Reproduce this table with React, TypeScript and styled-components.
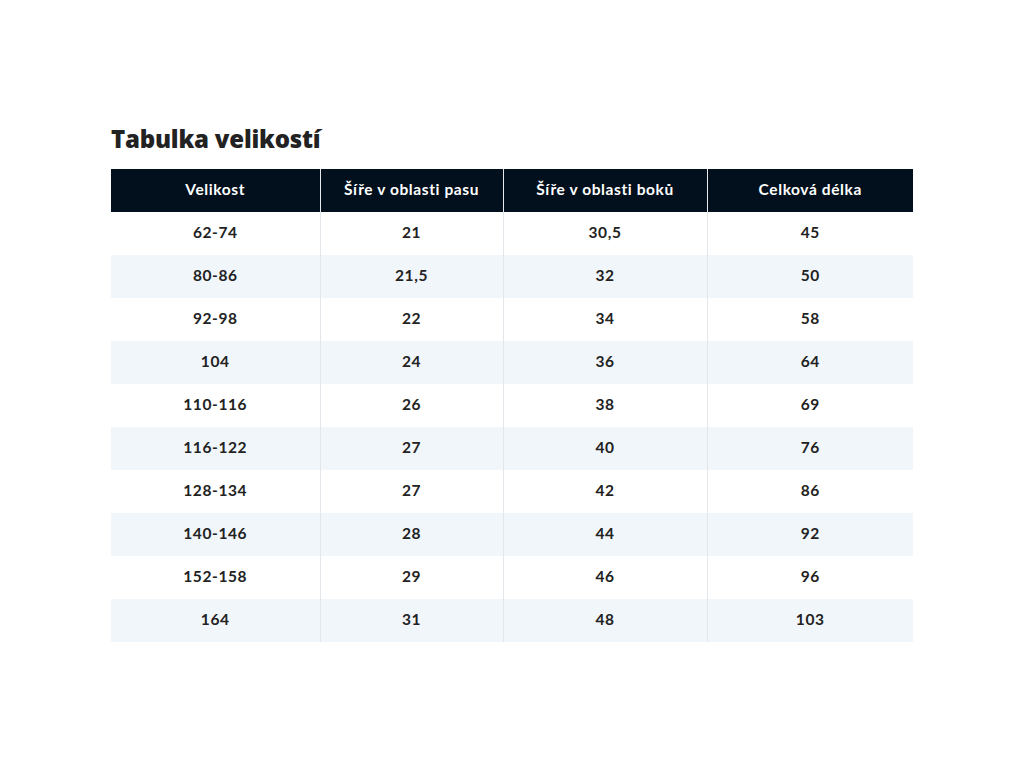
import React from "react";
import styled, { createGlobalStyle } from "styled-components";

const Global = createGlobalStyle`
  html, body { margin: 0; padding: 0; background: #ffffff; }
  body { font-family: "Lato", "Noto Sans", sans-serif; color: #222; }
`;

const Page = styled.main`
  width: 802px;
  margin: 0 auto;
  padding-top: 122px;
`;

const Title = styled.h2`
  margin: 0 0 14px 0;
  font-family: "Open Sans", "Noto Sans", sans-serif;
  font-weight: 800;
  font-size: 24px;
  line-height: 33px;
  color: #222222;
  letter-spacing: -0.2px;
`;

const Table = styled.table`
  width: 802px;
  border-collapse: collapse;
  table-layout: fixed;
  font-family: "Lato", "Noto Sans", sans-serif;
  font-weight: 700;
  font-size: 15.5px;
  letter-spacing: 0.6px;
`;

const Th = styled.th`
  box-sizing: border-box;
  height: 43px;
  padding: 0 0 4px 0;
  background: #020f1c;
  color: #ffffff;
  font-weight: 700;
  text-align: center;
  border-left: 1px solid #e6e9ee;
  &:first-child { border-left: none; }
`;

const Row = styled.tr<{ $striped: boolean }>`
  background: ${(p) => (p.$striped ? "#f1f6fa" : "#ffffff")};
`;

const Td = styled.td`
  box-sizing: border-box;
  height: 43px;
  padding: 0 0 4px 0;
  text-align: center;
  color: #222222;
  border-left: 1px solid #e3e6ea;
  &:first-child { border-left: none; }
`;

const headers = ["Velikost", "Šíře v oblasti pasu", "Šíře v oblasti boků", "Celková délka"];
const widths = [209, 183, 204, 206];
const rows = [
  ["62-74", "21", "30,5", "45"],
  ["80-86", "21,5", "32", "50"],
  ["92-98", "22", "34", "58"],
  ["104", "24", "36", "64"],
  ["110-116", "26", "38", "69"],
  ["116-122", "27", "40", "76"],
  ["128-134", "27", "42", "86"],
  ["140-146", "28", "44", "92"],
  ["152-158", "29", "46", "96"],
  ["164", "31", "48", "103"],
];

export default function App() {
  return (
    <>
      <Global />
      <Page>
        <Title>Tabulka velikostí</Title>
        <Table>
          <colgroup>
            {widths.map((w, i) => (
              <col key={i} style={{ width: w }} />
            ))}
          </colgroup>
          <thead>
            <tr>
              {headers.map((h) => (
                <Th key={h}>{h}</Th>
              ))}
            </tr>
          </thead>
          <tbody>
            {rows.map((r, i) => (
              <Row key={i} $striped={i % 2 === 1}>
                {r.map((c, j) => (
                  <Td key={j}>{c}</Td>
                ))}
              </Row>
            ))}
          </tbody>
        </Table>
      </Page>
    </>
  );
}
